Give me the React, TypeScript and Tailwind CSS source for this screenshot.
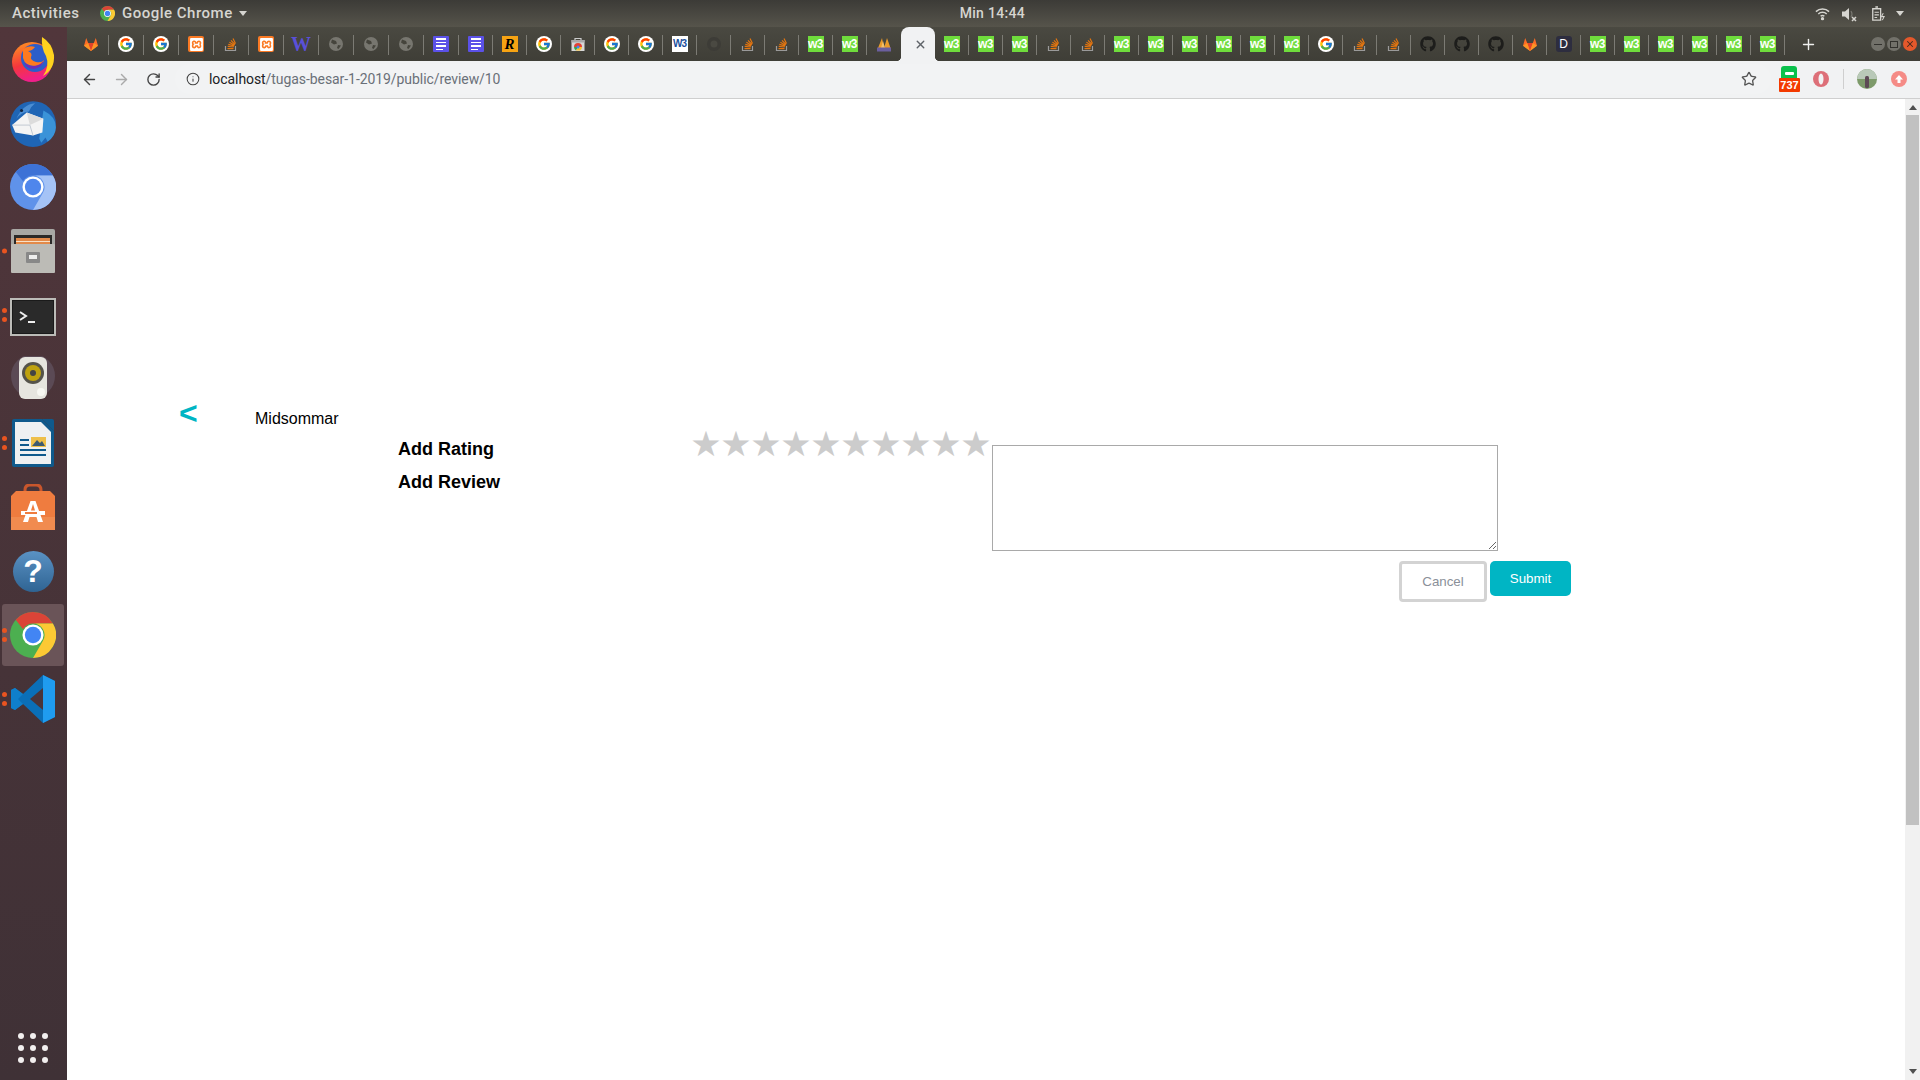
import { ArrowLeft, ArrowRight, Info, Plus, RotateCw, Star, X } from "lucide-react";
import { FaGithub } from "react-icons/fa";
import { FcGoogle } from "react-icons/fc";
import { SiXampp } from "react-icons/si";

type TabKind =
  | "gitlab" | "google" | "xampp" | "so" | "w" | "globe" | "doc" | "r"
  | "store" | "w3c" | "dark" | "w3" | "maniac" | "active" | "github" | "d";

const tabs: TabKind[] = [
  "gitlab", "google", "google", "xampp", "so", "xampp", "w", "globe", "globe", "globe",
  "doc", "doc", "r", "google", "store", "google", "google", "w3c", "dark", "so",
  "so", "w3", "w3", "maniac", "active", "w3", "w3", "w3", "so", "so",
  "w3", "w3", "w3", "w3", "w3", "w3", "google", "so", "so", "github",
  "github", "github", "gitlab", "d", "w3", "w3", "w3", "w3", "w3", "w3",
];

function GitlabIcon() {
  return (
    <svg viewBox="0 0 16 16" className="h-4 w-4">
      <path d="M8 15 1 9.800 3.200 2 5.200 7h5.600l2-5L15 9.800z" fill="#fc6d26" />
      <path d="M8 15 5.200 7h5.600z" fill="#e24329" />
      <path d="M8 15 1 9.800 5.200 7zM8 15l7-5.200L10.800 7z" fill="#fca326" opacity="0.75" />
    </svg>
  );
}

function StackIcon() {
  return (
    <svg viewBox="0 0 16 16" className="h-4 w-4" fill="none">
      <path d="M2.500 10v4.500h10V10" stroke="#9a9a9a" strokeWidth="1.200" />
      <path
        d="M4.500 12.600h6M4.700 10.400l6 .6M5.300 8.300l5.800 1.600M6.400 6.200l5.200 3M8 4.300l4 4.200M10 2.500l2.500 5"
        stroke="#e4750f"
        strokeWidth="1.200"
      />
    </svg>
  );
}

function TabIcon({ kind }: { kind: TabKind }) {
  switch (kind) {
    case "gitlab":
      return <GitlabIcon />;
    case "google":
      return (
        <span className="flex h-4 w-4 items-center justify-center rounded-full bg-white">
          <FcGoogle size={14} />
        </span>
      );
    case "xampp":
      return (
        <span className="flex h-4 w-4 items-center justify-center rounded-[2px] bg-[#fb7a24]">
          <SiXampp size={13} color="#fff" />
        </span>
      );
    case "so":
      return <StackIcon />;
    case "w":
      return (
        <span className="font-['Liberation_Serif',serif] text-[20px] leading-4 font-bold text-[#5a50d8]">W</span>
      );
    case "globe":
      return (
        <svg viewBox="0 0 16 16" className="h-4 w-4">
          <circle cx="8" cy="8" r="7" fill="#77766f" />
          <path d="M4 3.500 8 5l1 2.500-3 1L3 6.500zM10 9l3 .5-2.500 3.500-1.500-1z" fill="#45443c" />
        </svg>
      );
    case "dark":
      return (
        <svg viewBox="0 0 16 16" className="h-4 w-4">
          <circle cx="8" cy="8" r="7" fill="#3d3c37" />
          <circle cx="8" cy="8" r="3.500" fill="#4a4942" />
        </svg>
      );
    case "doc":
      return (
        <span className="flex h-4 w-4 flex-col items-center justify-center gap-[2px] rounded-[1px] bg-[#5b51e8]">
          <span className="h-[1.500px] w-[10px] bg-white" />
          <span className="h-[1.500px] w-[10px] bg-white" />
          <span className="h-[1.500px] w-[10px] bg-white" />
          <span className="ml-[3px] h-[1.500px] w-[7px] self-start bg-white" />
        </span>
      );
    case "r":
      return (
        <span className="flex h-4 w-4 items-center justify-center bg-[#f6a313] font-['Liberation_Serif',serif] text-[15px] leading-4 font-bold text-black italic">
          R
        </span>
      );
    case "store":
      return (
        <svg viewBox="0 0 16 16" className="h-4 w-4">
          <path d="M5 4V2.500h6V4" stroke="#ccc" fill="none" strokeWidth="1.200" />
          <rect x="1.500" y="4" width="13" height="11" fill="#d8d8d8" />
          <rect x="1.500" y="4" width="13" height="2.500" fill="#aaa" />
          <path d="M4 11a4 4 0 0 1 8 0z" fill="#e34133" />
          <path d="M4 11h4l-2 3.500A4 4 0 0 1 4 11z" fill="#2fa84f" />
          <path d="M12 11H8l-2 3.500h4A4 4 0 0 0 12 11z" fill="#fbc02d" />
          <circle cx="8" cy="11" r="1.500" fill="#4285f4" />
        </svg>
      );
    case "w3c":
      return (
        <span className="flex h-4 w-4 items-center justify-center bg-white font-['Liberation_Sans',sans-serif] text-[10px] leading-4 font-bold tracking-[-1px] text-[#1a4e9c]">
          W3
        </span>
      );
    case "w3":
      return (
        <span className="flex h-4 w-4 items-center justify-center bg-[#6fdc3c] font-['Liberation_Sans',sans-serif] text-[12px] leading-4 font-bold tracking-[-0.5px] text-white">
          w3
        </span>
      );
    case "maniac":
      return (
        <svg viewBox="0 0 16 16" className="h-4 w-4">
          <path d="M2 12 6 2l2 10zM8 12l3-10 3.500 10z" fill="#e99a2b" />
          <path d="M5 12 7 5l2 7z" fill="#f4c06a" />
          <rect x="1" y="11.500" width="14" height="4" fill="#6b5f9e" />
        </svg>
      );
    case "github":
      return <FaGithub size={16} color="#1d1d1b" />;
    case "d":
      return (
        <span className="flex h-4 w-4 items-center justify-center rounded-[3px] bg-[#2d2d3f] font-['Liberation_Sans',sans-serif] text-[12px] leading-4 text-white">
          D
        </span>
      );
    default:
      return null;
  }
}

function TabStrip() {
  return (
    <div className="flex h-[34px] items-stretch bg-gradient-to-b from-[#4a4941] to-[#3f3e37] pl-[6.500px]">
      {tabs.map((kind, i) => {
        if (kind === "active") {
          return (
            <div key={i} className="relative z-10 flex w-[34px] items-center justify-center rounded-t-[8px] bg-[#f1f2f3] pl-[6px]">
              <X size={13} strokeWidth={2.500} color="#5f6368" />
              <span className="absolute bottom-0 left-[-5px] h-[5px] w-[5px] bg-[radial-gradient(circle_at_0_0,transparent_5px,#f1f2f3_5.500px)]" />
              <span className="absolute right-[-5px] bottom-0 h-[5px] w-[5px] bg-[radial-gradient(circle_at_100%_0,transparent_5px,#f1f2f3_5.500px)]" />
            </div>
          );
        }
        return (
          <div key={i} className={`relative flex items-center justify-center ${i < 11 ? "w-[35px]" : "w-[34px]"}`}>
            <TabIcon kind={kind} />
            {tabs[i + 1] !== "active" && <span className="absolute top-[8px] right-0 h-[20px] w-px bg-[#7c7b74]" />}
          </div>
        );
      })}
      <div className="ml-[8.500px] flex w-[30px] items-center justify-center">
        <Plus size={17} strokeWidth={2} color="#f0f0ee" />
      </div>
      <div className="ml-auto flex items-center gap-[2px] pr-[3px]">
        <span className="flex h-[14px] w-[14px] items-center justify-center rounded-full bg-[#72716a]">
          <span className="h-px w-[8px] bg-[#33322e]" />
        </span>
        <span className="flex h-[14px] w-[14px] items-center justify-center rounded-full bg-[#72716a]">
          <span className="h-[7px] w-[8px] border border-[#33322e]" />
        </span>
        <span className="flex h-[14px] w-[14px] items-center justify-center rounded-full bg-[#e4582b]">
          <X size={10} strokeWidth={2.500} color="#45291f" />
        </span>
      </div>
    </div>
  );
}

function Toolbar() {
  return (
    <div className="flex h-[38px] items-center border-b border-[#cfcfcf] bg-[#f1f2f3] pb-[1px] pl-[14px]">
      <ArrowLeft size={17} strokeWidth={2} color="#444" />
      <ArrowRight size={17} strokeWidth={2} color="#aaa" className="ml-[15px]" />
      <RotateCw size={15} strokeWidth={2.200} color="#444" className="ml-[16px]" />
      <div className="ml-[14px] flex h-[30px] w-[1595.500px] items-center rounded-full bg-[#f2f3f4] pl-[11px]">
        <Info size={14} strokeWidth={1.800} color="#444" />
        <span className="ml-[9px] font-['Roboto',sans-serif] text-[14px] leading-none tracking-[-0.07px] text-[#202124]">
          localhost<span className="text-[#6a7078]">/tugas-besar-1-2019/public/review/10</span>
        </span>
        <Star size={16} strokeWidth={2} color="#555" className="mr-[14px] ml-auto" />
      </div>
      <div className="relative ml-[8.500px] h-[26px] w-[20px]">
        <span className="absolute top-0 left-[2px] flex h-[14px] w-[16px] items-center justify-center rounded-t-[3px] bg-[#0ac14c]">
          <span className="h-[3px] w-[9px] rounded-[1px] bg-white" />
        </span>
        <span className="absolute bottom-0 left-0 flex h-[14px] w-[21px] items-center justify-center rounded-[1px] bg-[#f33a00] font-['Liberation_Sans',sans-serif] text-[11px] leading-none font-bold text-white">
          737
        </span>
      </div>
      <svg viewBox="0 0 16 16" className="ml-[14px] h-4 w-4">
        <circle cx="8" cy="8" r="8" fill="#dd6f78" />
        <ellipse cx="8" cy="8" rx="2.500" ry="5.500" fill="#f1f2f3" />
      </svg>
      <span className="ml-[14px] h-[20px] w-px bg-[#cfcfcf]" />
      <svg viewBox="0 0 20 20" className="ml-[13px] h-5 w-5">
        <circle cx="10" cy="10" r="10" fill="#7d9a6a" />
        <path d="M0 10a10 10 0 0 1 20 0z" fill="#b9c9b8" />
        <rect x="8" y="7" width="4" height="12" rx="1.500" fill="#5d4a55" />
      </svg>
      <span className="ml-[14px] flex h-4 w-4 items-center justify-center rounded-full bg-[#f58b86]">
        <svg viewBox="0 0 10 10" className="h-[10px] w-[10px]">
          <path d="M5 1 9 5.500H6.500V9h-3V5.500H1z" fill="#fff" />
        </svg>
      </span>
    </div>
  );
}

function TopBar() {
  return (
    <div className="flex h-[27px] items-center bg-gradient-to-b from-[#3c3b37] to-[#56544b] font-['Roboto',sans-serif] text-[15px] font-medium tracking-[0.5px] text-[#d6d5d0]">
      <span className="ml-[12px] w-[88px]">Activities</span>
      <ChromeLogo className="h-[15px] w-[15px]" />
      <span className="ml-[7px]">Google Chrome</span>
      <span className="ml-[6px] h-0 w-0 border-x-[4.500px] border-t-[5px] border-x-transparent border-t-[#d6d5d0]" />
      <span className="ml-[713px] text-[14px] tracking-[0.3px]">Min 14:44</span>
      <div className="ml-auto flex items-center pr-[16px]">
        <svg viewBox="0 0 16 16" className="h-[15px] w-[15px]" fill="none" stroke="#d6d5d0" strokeWidth="1.600">
          <path d="M1 6a10 10 0 0 1 14 0M3.500 8.500a6.500 6.500 0 0 1 9 0M6 11a3 3 0 0 1 4 0" />
          <circle cx="8" cy="13.500" r="1" fill="#d6d5d0" />
        </svg>
        <svg viewBox="0 0 16 16" className="ml-[11px] h-[16px] w-[16px]">
          <path d="M1 5.500h3L8 2v12l-4-3.500H1z" fill="#d6d5d0" />
          <path d="M10 5q2 3 0 6" fill="none" stroke="#77766f" strokeWidth="1.200" />
          <path d="m11 11 4 4m0-4-4 4" stroke="#d6d5d0" strokeWidth="1.500" />
        </svg>
        <svg viewBox="0 0 16 18" className="ml-[14px] h-[16px] w-[14px]" fill="none" stroke="#d6d5d0" strokeWidth="1.500">
          <path d="M2 3h9v13H2zM5 1h3" />
          <path d="M4 7h5M4 10h5M4 13h3" strokeWidth="1.200" />
          <path d="m14 8-2 4h3l-2 4" strokeWidth="1.200" />
        </svg>
        <span className="ml-[11px] h-0 w-0 border-x-[4.500px] border-t-[5px] border-x-transparent border-t-[#d6d5d0]" />
      </div>
    </div>
  );
}

function ChromeLogo({ className }: { className: string }) {
  return (
    <svg viewBox="0 0 48 48" className={className}>
      <circle cx="24" cy="24" r="24" fill="#4caf50" />
      <path d="M24 0a24 24 0 0 1 20.800 12H24a12 12 0 0 0-10.400 6L6 8a24 24 0 0 1 18-8z" fill="#db4437" />
      <path d="M44.800 12A24 24 0 0 1 24 48l10.400-18A12 12 0 0 0 24 12z" fill="#fcc934" />
      <circle cx="24" cy="24" r="11" fill="#fff" />
      <circle cx="24" cy="24" r="8.500" fill="#4285f4" />
    </svg>
  );
}

function DockIcon({ name }: { name: string }) {
  switch (name) {
    case "firefox":
      return (
        <svg viewBox="0 0 48 48" className="h-[48px] w-[48px]">
          <defs>
            <linearGradient id="ff" x1="0" y1="0" x2="0.300" y2="1">
              <stop offset="0" stopColor="#ff9a1f" />
              <stop offset="0.600" stopColor="#f5373d" />
              <stop offset="1" stopColor="#f01f8a" />
            </linearGradient>
          </defs>
          <circle cx="23" cy="27" r="20" fill="url(#ff)" />
          <circle cx="26" cy="23" r="14" fill="#2c5ec9" />
          <path d="M14 14q6-4 12-2-3 4-7 4 5 2 3 6-1 3 5 5 6 1 8-2-1 6-9 6-10 0-12-8z" fill="#ff7a1f" />
          <path d="M33 2q10 6 12 18 1 14-11 21 7-10 3-20-5-8-4-19z" fill="#ffd21f" />
          <path d="M15 27q6 6 14 3 5-2 6-6-1 8-10 10-8 0-10-7z" fill="#6d2fb8" />
        </svg>
      );
    case "thunderbird":
      return (
        <svg viewBox="0 0 48 48" className="h-[50px] w-[50px]">
          <circle cx="24" cy="25" r="22" fill="#1f65b5" />
          <path d="M8 20Q14 6 26 5q-4 3-6 8-8 1-12 7z" fill="#4b8ed3" />
          <path d="M34 12q12 6 12 16 0 8-8 14l-2-4-4 5-2-4z" fill="#3a93d8" />
          <path d="m4 26 14-12 16 6-1 13-9 3-17-3z" fill="#f4f4f4" />
          <path d="m18 14 16 6-13 6z" fill="#dcdcdc" />
          <path d="m4 26 17 0 3 10" fill="none" stroke="#b9c2cc" strokeWidth="0.800" />
          <circle cx="13" cy="12" r="1.500" fill="#10243f" />
        </svg>
      );
    case "chromium":
      return (
        <svg viewBox="0 0 48 48" className="h-[46px] w-[46px]">
          <circle cx="24" cy="24" r="24" fill="#5f92ea" />
          <path d="M24 0a24 24 0 0 1 20.800 12H24a12 12 0 0 0-10.400 6L6 8a24 24 0 0 1 18-8z" fill="#3d72d6" />
          <path d="M44.800 12A24 24 0 0 1 24 48l10.400-18A12 12 0 0 0 24 12z" fill="#a5c3f6" />
          <circle cx="24" cy="24" r="11" fill="#fff" />
          <circle cx="24" cy="24" r="8.500" fill="#4f86ec" />
        </svg>
      );
    case "files":
      return (
        <svg viewBox="0 0 44 44" className="h-[44px] w-[44px]">
          <rect x="0" y="0" width="44" height="41" rx="2" fill="#a8a8a4" />
          <rect x="3" y="6" width="38" height="12" fill="#2b2a28" />
          <rect x="5" y="9" width="34" height="9" fill="#e28a4a" />
          <rect x="5" y="12" width="34" height="1" fill="#f6e1c9" />
          <rect x="0" y="15" width="44" height="29" rx="1" fill="#bcbbb6" />
          <rect x="15" y="23" width="14" height="11" rx="1" fill="#888" />
          <rect x="18" y="26" width="8" height="4" fill="#eee" />
        </svg>
      );
    case "terminal":
      return (
        <span className="mt-[3px] flex h-[38px] w-[46px] flex-col justify-center border-[2px] border-[#bcbcb8] bg-[#2a2a2a] pl-[6px] outline outline-[#1a1a1a] -outline-offset-[3px]">
          <svg viewBox="0 0 16 12" className="h-[12px] w-[18px]" fill="none" stroke="#eee" strokeWidth="2">
            <path d="m1 1 6 4-6 4M9 11h7" />
          </svg>
        </span>
      );
    case "speaker":
      return (
        <svg viewBox="0 0 44 46" className="h-[46px] w-[44px]">
          <circle cx="22" cy="20" r="22" fill="#5b4a55" />
          <rect x="8" y="1" width="28" height="42" rx="6" fill="#e6e5df" />
          <circle cx="22" cy="17" r="11" fill="#55534b" />
          <circle cx="22" cy="17" r="8" fill="#bfa20f" />
          <circle cx="22" cy="17" r="3" fill="#444" />
          <circle cx="30" cy="36" r="4" fill="#f7f7f2" />
        </svg>
      );
    case "writer":
      return (
        <svg viewBox="0 0 42 48" className="h-[48px] w-[42px]">
          <path d="M2 0h28l12 12v34a2 2 0 0 1-2 2H2a2 2 0 0 1-2-2V2a2 2 0 0 1 2-2z" fill="#0f5a8c" />
          <path d="M3 3h26l10 10v32H3z" fill="#eef1f2" />
          <path d="M30 0h10a2 2 0 0 1 2 2v10z" fill="#0f5a8c" />
          <path d="M8 20h9v2H8zM8 25h9v2H8zM8 30h26v2H8zM8 35h26v2H8z" fill="#0f5a8c" />
          <rect x="19" y="18" width="15" height="10" fill="#eec04a" />
          <path d="m20 27 5-6 3 3 2-2 3 5z" fill="#3c5a70" />
        </svg>
      );
    case "store":
      return (
        <svg viewBox="0 0 44 46" className="h-[46px] w-[44px]">
          <path d="M14 12V6q0-5 5-5h6q5 0 5 5v6" fill="none" stroke="#c9562c" strokeWidth="3" />
          <path d="M0 12 5 7h34l5 5v34H0z" fill="#ef7c3f" />
          <path d="M0 33h44v13H0z" fill="#f18b4f" />
          <path d="M12 38 19.500 17h5L32 38h-5l-1.500-5h-7L17 38z" fill="#fff" />
          <path d="M20 26.500 22 20l2 6.500z" fill="#ef7c3f" />
          <rect x="10" y="27" width="24" height="4" fill="#fff" />
          <rect x="14" y="28" width="12" height="2" fill="#ef7c3f" />
        </svg>
      );
    case "help":
      return (
        <span className="flex h-[41px] w-[41px] items-center justify-center rounded-full bg-gradient-to-b from-[#5a92c4] to-[#2f6493] font-['Liberation_Sans',sans-serif] text-[32px] font-bold text-white">
          ?
        </span>
      );
    case "chrome":
      return <ChromeLogo className="h-[46px] w-[46px]" />;
    case "vscode":
      return (
        <svg viewBox="0 0 44 48" className="h-[48px] w-[44px]">
          <path d="M32 0 44 6v36l-12 6-20-19-8 6-4-2v-18l4-2 8 6z" fill="#0a6fb8" />
          <path d="M32 0 44 6v36l-12 6z" fill="#1f9cf0" />
          <path d="m32 13-13 11 13 11z" fill="#4b3439" />
          <path d="m4 13 8 6-5 5 5 5-8 6-4-2V15z" fill="#0f7fcb" />
        </svg>
      );
    default:
      return (
        <span className="grid grid-cols-3 gap-[6px]">
          {Array.from({ length: 9 }).map((_, i) => (
            <span key={i} className="h-[6px] w-[6px] rounded-full bg-[#f2efef]" />
          ))}
        </span>
      );
  }
}

const dockItems = [
  { name: "firefox", dots: 0 },
  { name: "thunderbird", dots: 0 },
  { name: "chromium", dots: 0 },
  { name: "files", dots: 1 },
  { name: "terminal", dots: 2 },
  { name: "speaker", dots: 0 },
  { name: "writer", dots: 2 },
  { name: "store", dots: 0 },
  { name: "help", dots: 0 },
  { name: "chrome", dots: 2 },
  { name: "vscode", dots: 2 },
];

function Dock() {
  return (
    <div className="flex w-[67px] flex-col bg-gradient-to-b from-[#51363b] to-[#3f3136] pr-px">
      {dockItems.map((item) => (
        <div key={item.name} className="relative flex h-[64px] items-center justify-center">
          {item.name === "chrome" && <span className="absolute inset-x-[2px] inset-y-px rounded-[3px] bg-[#6a5458]" />}
          <span className="relative flex items-center justify-center">
            <DockIcon name={item.name} />
          </span>
          {item.dots > 0 && (
            <span className="absolute top-1/2 left-[2px] flex -translate-y-1/2 flex-col gap-[4px]">
              {Array.from({ length: item.dots }).map((_, i) => (
                <span key={i} className="h-[5px] w-[5px] rounded-full bg-[#e95420]" />
              ))}
            </span>
          )}
        </div>
      ))}
      <div className="mt-auto flex h-[64px] items-center justify-center">
        <DockIcon name="apps" />
      </div>
    </div>
  );
}

function ReviewForm() {
  return (
    <div className="flex-1 bg-white pt-[301px] font-['Liberation_Sans',sans-serif] text-black">
      <div className="flex h-[33px] pl-[112px]">
        <span className="mt-[-7px] w-[76px] text-[32px] leading-[40px] font-bold text-[#00b5c4]">&lt;</span>
        <span className="mt-[10px] text-[16px] leading-[18px]">Midsommar</span>
      </div>
      <div className="flex pl-[331px]">
        <div className="w-[293px] text-[18px] leading-[33px] font-bold">
          <div>Add Rating</div>
          <div>Add Review</div>
        </div>
        <div className="mt-[-5px] flex w-[301px] items-start">
          {Array.from({ length: 10 }).map((_, i) => (
            <span key={i} className="flex h-[33px] w-[30px] items-center justify-center font-['DejaVu_Sans',sans-serif] text-[35px] leading-none text-[#cccccc]">
              ★
            </span>
          ))}
        </div>
        <textarea className="mt-[12px] block h-[106px] w-[506px] border border-[#a9a9a9] bg-white" />
      </div>
      <div className="mt-[10px] flex items-start gap-[3px] pl-[1332px] text-[13.333px]">
        <button type="button" className="h-[41px] w-[88px] rounded-[4px] border-[3px] border-[#d3d3d3] bg-white text-[#8a9099]">
          Cancel
        </button>
        <button type="button" className="h-[35px] w-[81px] rounded-[5px] bg-[#00b5c4] text-white">
          Submit
        </button>
      </div>
    </div>
  );
}

function Scrollbar() {
  return (
    <div className="flex w-[15px] flex-col items-center bg-[#f1f1f1]">
      <span className="mt-[6px] h-0 w-0 border-x-[4px] border-b-[5px] border-x-transparent border-b-[#505050]" />
      <span className="mt-[5px] h-[710px] w-[13px] bg-[#c1c1c1]" />
      <span className="mt-auto mb-[6px] h-0 w-0 border-x-[4px] border-t-[5px] border-x-transparent border-t-[#505050]" />
    </div>
  );
}

export default function App() {
  return (
    <div className="flex h-[1080px] w-[1920px] flex-col overflow-hidden bg-white">
      <TopBar />
      <div className="flex flex-1">
        <Dock />
        <div className="flex flex-1 flex-col">
          <TabStrip />
          <Toolbar />
          <div className="flex flex-1">
            <ReviewForm />
            <Scrollbar />
          </div>
        </div>
      </div>
    </div>
  );
}
